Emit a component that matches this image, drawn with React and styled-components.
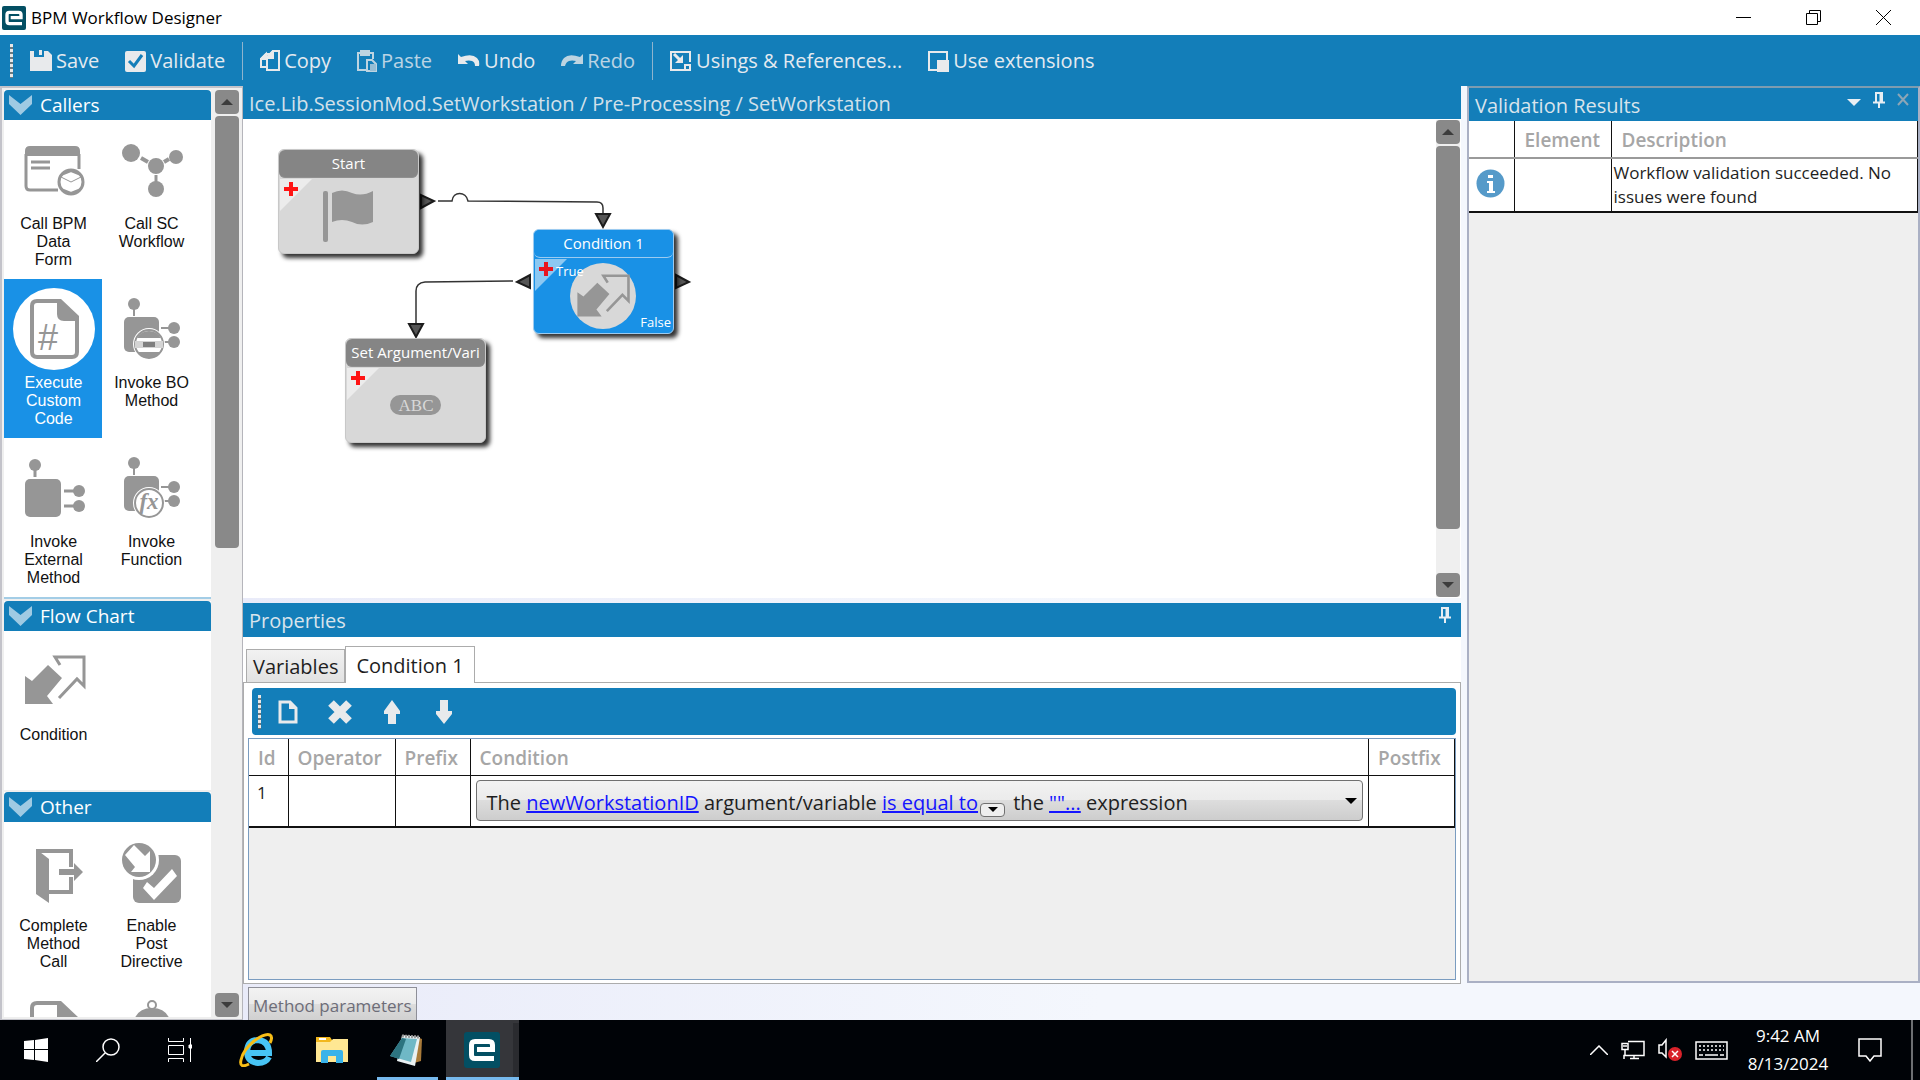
import React, { useState } from 'react'
import styled, { createGlobalStyle } from 'styled-components'

const blue = '#137eb9'
const grey = '#969696'
const ui = "'Open Sans', 'Noto Sans', sans-serif"
const arial = "'Liberation Sans', Arial, sans-serif"

const GlobalStyle = createGlobalStyle`
  * {
    box-sizing: border-box;
  }
  body {
    margin: 0;
    font-family: ${ui};
    font-size: 20px;
    color: #1e1e1e;
  }
  button {
    font: inherit;
    color: inherit;
    background: none;
    border: none;
    padding: 0;
  }
  svg {
    display: block;
    flex: none;
  }
`

const Screen = styled.div`
  display: flex;
  flex-direction: column;
  height: 100vh;
  overflow: hidden;
  background: #fff;
`

// window title bar

const TitleBar = styled.header`
  display: flex;
  align-items: center;
  flex: none;
  height: 35px;
  padding: 0 2px;
  background: #fff;
`

const WindowTitle = styled.h1`
  flex: 1;
  margin: 0 0 0 5px;
  font-size: 17px;
  font-weight: 400;
  line-height: 35px;
  color: #000;
`

const WindowButton = styled.button`
  display: flex;
  align-items: center;
  justify-content: center;
  width: 70px;
  height: 35px;
`

// main toolbar

const Toolbar = styled.nav`
  display: flex;
  align-items: center;
  flex: none;
  height: 51px;
  padding-left: 10px;
  background: ${blue};
  color: #e4eaf0;
`

const Grip = styled.span`
  width: 3px;
  height: 34px;
  background: repeating-linear-gradient(#e8e8e8 0 3px, #6c7a80 3px 5px);
`

const ToolGroup = styled.div`
  display: flex;
  gap: 26px;
  padding: 0 17px;
`

const ToolButton = styled.button`
  display: flex;
  align-items: center;
  gap: 4px;
  line-height: 26px;
  opacity: ${props => (props.disabled ? 0.8 : 1)};
`

const ToolSeparator = styled.span`
  width: 1px;
  height: 38px;
  background: #8fb4cd;
`

const Main = styled.main`
  display: flex;
  flex: 1;
  min-height: 0;
`

// toolbox on the left

const Sidebar = styled.aside`
  display: flex;
  gap: 4px;
  flex: none;
  width: 243px;
  padding: 2px 3px 2px 2px;
  border: 2px solid #c3c3ca;
  border-right: 1px solid #b5b5bb;
  border-bottom-width: 1px;
  background: #efefef;
`

const Groups = styled.div`
  flex: 1;
  overflow: hidden;
`

const Group = styled.section`
  margin-bottom: 2px;
  background: #fff;
  border-bottom: ${props => (props.$ruled ? '2px solid #a3cde6' : 'none')};
`

const GroupHeader = styled.button`
  display: flex;
  align-items: center;
  gap: 8px;
  width: 100%;
  height: 30px;
  padding-left: 5px;
  border-radius: 4px 4px 0 0;
  background: ${blue};
  color: #fff;
  font-size: 19px;
  line-height: 30px;
`

const Tiles = styled.div`
  display: grid;
  grid-template-columns: 98px 98px;
`

const Tile = styled.button`
  display: flex;
  flex-direction: column;
  align-items: center;
  height: 159px;
  padding: 9px 11px 0 12px;
  font-family: ${arial};
  font-size: 16px;
  line-height: 18px;
  gap: 4px;
  color: ${props => (props.$selected ? '#fff' : '#111')};
  background: ${props => (props.$selected ? '#1991e6' : 'transparent')};
`

const IconDisc = styled.span`
  border-radius: 50%;
  background: ${props => (props.$selected ? '#fff' : 'transparent')};
`

// scroll bars

const ScrollTrack = styled.div`
  display: flex;
  flex-direction: column;
  flex: none;
  gap: 2px;
  width: 24px;
  background: #efefef;
`

const ScrollButton = styled.button`
  display: flex;
  align-items: center;
  justify-content: center;
  flex: none;
  width: 24px;
  height: 24px;
  border-radius: 4px;
  background: #898989;
`

const ScrollLane = styled.div`
  flex: 1;
`

const ScrollThumb = styled.div`
  height: ${props => props.$size}%;
  border-radius: 4px;
  background: #898989;
`

// designer column

const Center = styled.div`
  display: flex;
  flex-direction: column;
  flex: 1;
  min-width: 0;
  background: linear-gradient(90deg, #e9ebf9, #f4f7fd 70%);
  padding-right: 6px;
`

const Breadcrumb = styled.div`
  flex: none;
  height: 33px;
  padding-left: 6px;
  background: ${blue};
  color: #d3e1ea;
  line-height: 36px;
  white-space: nowrap;
`

const CanvasRow = styled.div`
  display: flex;
  flex: 1;
  min-height: 0;
  padding: 1px 1px 1px 0;
  background: #fff;
`

const Canvas = styled.div`
  position: relative;
  flex: 1;
  overflow: hidden;
`

const Node = styled.div`
  position: absolute;
  left: ${props => props.$x}px;
  top: ${props => props.$y}px;
  width: 141px;
  height: 105px;
  border: 1px solid ${props => (props.$selected ? '#9ccbf0' : '#c8c8c8')};
  border-radius: 6px;
  background: ${props => (props.$selected ? '#1991e6' : '#d8d8d8')};
  box-shadow: 4px 4px 4px rgba(0, 0, 0, 0.8);
`

const NodeTitle = styled.div`
  height: 28px;
  padding: 0 2px;
  border-radius: 6px;
  border-bottom: 1px solid ${props => (props.$selected ? '#9ccbf0' : '#909090')};
  background: ${props => (props.$selected ? '#1991e6' : '#858585')};
  color: #fff;
  font-size: 15px;
  line-height: 26px;
  text-align: center;
  white-space: nowrap;
`

const NodeBody = styled.svg`
  font-size: 13px;
`

// properties panel

const Properties = styled.section`
  display: flex;
  flex-direction: column;
  flex: none;
  height: 381px;
  margin-top: 5px;
  background: #fff;
`

const PanelHeader = styled.div`
  display: flex;
  align-items: flex-start;
  flex: none;
  height: ${props => props.$height}px;
  padding: 0 ${props => props.$end}px 0 6px;
  background: ${blue};
  color: #d9e4ec;
`

const PanelTitle = styled.h2`
  flex: 1;
  margin: 0;
  font-size: 20px;
  font-weight: 400;
  line-height: 36px;
`

const PanelButton = styled.button`
  padding-top: 4px;
  margin-left: 12px;
`

const Tabs = styled.div`
  display: flex;
  align-items: flex-end;
  flex: none;
  height: 45px;
  padding-left: 3px;
`

const Tab = styled.button`
  height: ${props => (props.$active ? 37 : 33)}px;
  padding: 0 ${props => (props.$active ? 10 : 6)}px;
  margin-bottom: ${props => (props.$active ? -1 : 0)}px;
  border: 1px solid #acacac;
  border-bottom: none;
  background: ${props => (props.$active ? '#fff' : 'linear-gradient(#f2f2f2, #e2e2e2)')};
  z-index: ${props => (props.$active ? 1 : 0)};
`

const TabPanel = styled.div`
  display: flex;
  flex-direction: column;
  flex: 1;
  gap: 3px;
  min-height: 0;
  padding: 5px 4px 3px;
  border: 1px solid #acacac;
`

const GridToolbar = styled.div`
  display: flex;
  align-items: center;
  flex: none;
  gap: 26px;
  height: 47px;
  margin-left: 4px;
  padding-left: 6px;
  border-radius: 4px;
  background: ${blue};

  ${Grip} {
    margin-right: -12px;
  }
`

const GridButton = styled.button`
  display: flex;
  width: 26px;
  justify-content: center;
`

const GridFrame = styled.div`
  flex: 1;
  min-height: 0;
  border: 1px solid #7a9cc0;
  background: #efefef;
`

const Table = styled.table`
  width: 100%;
  border-collapse: collapse;
  table-layout: fixed;
  background: #fff;
`

const Th = styled.th`
  height: 36px;
  padding: 2px 8px 0 9px;
  border-right: 1px solid #111;
  border-bottom: 1px solid #111;
  color: #a6a6a6;
  font-size: 19px;
  font-weight: 600;
  text-align: left;
  white-space: nowrap;
`

const Td = styled.td`
  height: ${props => props.$height}px;
  padding: ${props => props.$pad || '2px'};
  border-right: 1px solid #111;
  border-bottom: 2px solid #111;
  font-size: 17px;
  line-height: 24px;
  vertical-align: ${props => props.$align || 'middle'};
`

const Col = styled.col`
  width: ${props => (props.$width ? `${props.$width}px` : 'auto')};
`

const ConditionBox = styled.div`
  display: flex;
  align-items: center;
  height: 41px;
  padding: 0 5px 0 10px;
  border: 1px solid #707070;
  border-radius: 4px;
  background: linear-gradient(#f2f2f2, #ebebeb 50%, #dddddd 50%, #cdcdcd);
  font-size: 20px;
  white-space: pre;
`

const ConditionText = styled.div`
  flex: 1;
  padding-top: 6px;
`

const ValueLink = styled.a`
  color: #1414ff;
  text-decoration: underline;
`

const SmallDrop = styled.button`
  display: inline-flex;
  align-items: center;
  justify-content: center;
  width: 25px;
  height: 14px;
  margin: 0 3px 0 2px;
  border: 1px solid #707070;
  border-radius: 4px;
  background: #eee;
  vertical-align: -2px;
`

const BottomTabs = styled.div`
  flex: none;
  height: 36px;
  padding: 3px 5px 0;
`

const BottomTab = styled.button`
  height: 33px;
  padding: 2px 4px 0;
  border: 1px solid #8e8f98;
  border-bottom: none;
  background: linear-gradient(#f3f3f3, #ebebeb 50%, #dddddd 50%, #d0d0d0);
  color: #6d6d78;
  font-size: 17px;
`

// validation results

const RightColumn = styled.div`
  display: flex;
  flex: none;
  width: 453px;
  padding-bottom: 37px;
  background: #f4f7fd;
`

const Validation = styled.section`
  display: flex;
  flex-direction: column;
  flex: 1;
  border: 2px solid #aab0c4;
  border-top-color: #7d9cb0;
  background: #efefef;

  ${Th} {
    height: 37px;
    padding: 2px 10px 0;
    border-bottom: 2px solid #9a9a9a;
  }
`

// windows taskbar

const Taskbar = styled.footer`
  display: flex;
  flex: none;
  height: 60px;
  background: #000307;
  color: #fff;
`

const TaskButton = styled.button`
  display: flex;
  align-items: center;
  justify-content: center;
  width: 72px;
  height: 60px;
  border-top: 3px solid transparent;
  border-bottom: 3px solid transparent;
`

const AppButton = styled(TaskButton)`
  width: 76px;
`

const RunningButton = styled(TaskButton)`
  width: 61px;
  margin: 0 8px 0 7px;
  padding-right: 3px;
  border-bottom-color: #76b9ed;
`

const ActiveButton = styled(TaskButton)`
  width: 73px;
  padding-right: 2px;
  border-bottom-color: #76b9ed;
  background: #35363a;
  box-shadow: inset -6px 0 #2a2b2f;
`

const TaskPinned = styled.div`
  display: flex;
  flex: 1;
`

const TaskApps = styled.div`
  display: flex;
  padding-left: 2px;
`

const Tray = styled.div`
  display: flex;
  align-items: center;
  gap: 13px;
  padding-right: 7px;
`

const Clock = styled.time`
  width: 104px;
  padding-right: 10px;
  font-size: 17px;
  line-height: 28px;
  text-align: center;
`

const ShowDesktop = styled.span`
  width: 2px;
  height: 60px;
  margin-left: 16px;
  background: #6d6f72;
`

// icons

const Triangle = ({ up, size = 12, color = '#3c3c3c' }) => (
  <svg width={size} height={size / 2} viewBox='0 0 12 6'>
    <path d={up ? 'M0 6L6 0L12 6Z' : 'M0 0L12 0L6 6Z'} fill={color} />
  </svg>
)

const AppLogo = ({ size }) => (
  <svg width={size} height={size} viewBox='0 0 36 36'>
    <rect width='36' height='36' rx='3' fill='#034f63' />
    <path
      d='M30 26.5H11Q7.5 26.5 7.5 23V13Q7.5 9.5 11 9.5H25Q28.5 9.5 28.5 13V17.5H13'
      fill='none'
      stroke='#fff'
      strokeWidth='5'
    />
  </svg>
)

const Pin = () => (
  <svg width='12' height='16' viewBox='0 0 12 16' fill='none' stroke='#e8eef3' strokeWidth='2'>
    <path d='M3 10V1H9V10M0 10.5H12M6 10V16' />
    <path d='M7.5 1V10' />
  </svg>
)

const Chevron = () => (
  <svg width='23' height='20' viewBox='0 0 23 20'>
    <path d='M0 0L11.5 9L23 0V9L11.5 20L0 9Z' fill='#9fcae3' />
  </svg>
)

const toolIcons = {
  save: (
    <svg width='22' height='22' viewBox='0 0 22 22'>
      <path d='M0 1H4V7H14V1H18L22 5V21H0Z M9 0H12V5H9Z' fill='#e8eaec' />
    </svg>
  ),
  validate: (
    <svg width='21' height='22' viewBox='0 0 21 22'>
      <rect y='1' width='21' height='21' rx='2' fill='#e8eaec' />
      <path d='M4 11L9 16L17 5' fill='none' stroke={blue} strokeWidth='3' />
    </svg>
  ),
  copy: (
    <svg width='20' height='22' viewBox='0 0 20 22' fill={blue} stroke='#e8eaec' strokeWidth='2'>
      <path d='M1 9L6 4H12V17H1Z' />
      <path d='M1 9H6V4Z' fill='#e8eaec' />
      <path d='M7 7L13 1H19V20H7Z' />
      <path d='M7 8H13V1Z' fill='#e8eaec' />
    </svg>
  ),
  paste: (
    <svg width='20' height='22' viewBox='0 0 20 22' fill='none' stroke='#e8eaec' strokeWidth='2'>
      <path d='M9 20H1V3H16V9' />
      <path d='M4 1H12V5H4Z' fill='#e8eaec' />
      <path d='M10 10H15L19 14V21H10Z' />
      <path d='M13 14H19V21H13Z' fill='#b9cfdd' stroke='none' />
    </svg>
  ),
  undo: (
    <svg width='22' height='14' viewBox='0 0 22 14'>
      <path d='M0 0L3 3Q14 -1 19 4Q22 7 21 12L17 12Q17 8 14 7Q11 6 7 7L10 10H0Z' fill='#e8eaec' />
    </svg>
  ),
  redo: (
    <svg width='22' height='14' viewBox='0 0 22 14'>
      <path d='M22 0L19 3Q8 -1 3 4Q0 7 0 12L4 12Q5 8 8 7Q11 6 15 7L12 10H22Z' fill='#e8eaec' />
    </svg>
  ),
  usings: (
    <svg width='22' height='22' viewBox='0 0 22 22' fill='none' stroke='#e8eaec' strokeWidth='2'>
      <path d='M14 20H1V2H20V12' />
      <path d='M4 4L11 11' strokeWidth='3' />
      <path d='M13 5V13H5Z' fill='#e8eaec' stroke='none' />
      <path d='M15 15H20V20H15Z' />
    </svg>
  ),
  extensions: (
    <svg width='21' height='22' viewBox='0 0 21 22' fill='none' stroke='#e8eaec' strokeWidth='2'>
      <path d='M1 2H19V20H1Z' />
      <path d='M9 10H21V22H9Z' fill='#e8eaec' stroke='none' />
    </svg>
  )
}

const ConditionArrows = () => (
  <>
    <path d='M12 36L19 41L35 25L49 38L34 56L40 64H12Z' fill={grey} />
    <path d='M47 25L42 17H71V46L64 39L46 58' fill='none' stroke={grey} strokeWidth='3' />
  </>
)

const Pins = ({ children }) => (
  <>
    <path d='M23 17V28M50 40H63M50 54H63' stroke={grey} strokeWidth='2' />
    <circle cx='23' cy='16' r='6' fill={grey} />
    <circle cx='63' cy='40' r='6' fill={grey} />
    <circle cx='63' cy='54' r='6' fill={grey} />
    <rect x='13' y='29' width='35' height='35' rx='5' fill={grey} />
    <circle cx='38' cy='56' r='16' fill='#fff' />
    <circle cx='38' cy='56' r='14' fill='#fff' stroke={grey} strokeWidth='2' />
    {children}
  </>
)

const DocShape = () => (
  <>
    <path
      d='M45 13H24Q19 13 19 18V64Q19 69 24 69H59Q64 69 64 64V31'
      fill='none'
      stroke={grey}
      strokeWidth='4'
    />
    <path d='M44 11H48L66 28V33H51Q44 33 44 26Z' fill={grey} />
  </>
)

const tileIcons = {
  form: (
    <>
      <path d='M12 22Q12 17 17 17H62Q67 17 67 22V27H12Z' fill={grey} />
      <path d='M13 25V57Q13 61 17 61H45M66 25V40' fill='none' stroke={grey} strokeWidth='3' />
      <path d='M18 33H37M18 39H37' stroke={grey} strokeWidth='3' />
      <circle cx='58' cy='53' r='12' fill='#fff' stroke={grey} strokeWidth='3' />
      <path d='M48 48L58 53L68 48' fill='none' stroke={grey} strokeWidth='1' />
      <path d='M48 46L58 42L68 46M48 60L58 64L68 60' fill='none' stroke={grey} strokeWidth='2' />
    </>
  ),
  workflow: (
    <>
      <path d='M30 29L37 33M53 33L58 30' stroke={grey} strokeWidth='4' />
      <path d='M45 46V53' stroke={grey} strokeWidth='3' />
      <circle cx='20' cy='24' r='9' fill={grey} />
      <circle cx='45' cy='37' r='8' fill={grey} />
      <circle cx='65' cy='28' r='7' fill={grey} />
      <circle cx='45' cy='60' r='8' fill={grey} />
    </>
  ),
  code: (
    <>
      <DocShape />
      <text x='35' y='62' textAnchor='middle' fontFamily={arial} fontSize='36' fill={grey}>#</text>
    </>
  ),
  bo: (
    <Pins>
      <path d='M26 50Q30 43 38 43Q46 43 50 50ZM26 64Q30 70 38 70Q46 70 50 64Z' fill={grey} />
      <path d='M24 53H52V60H24Z' fill='#d4d4d4' />
      <path d='M32 54H44V59H32Z' fill='#7f7f7f' />
    </Pins>
  ),
  external: (
    <>
      <path d='M22 19V30M51 44H66M51 59H66' stroke={grey} strokeWidth='3' />
      <circle cx='22' cy='18' r='6' fill={grey} />
      <circle cx='66' cy='44' r='6' fill={grey} />
      <circle cx='66' cy='59' r='6' fill={grey} />
      <rect x='12' y='32' width='36' height='38' rx='5' fill={grey} />
    </>
  ),
  fx: (
    <Pins>
      <text
        x='38'
        y='62'
        textAnchor='middle'
        fontFamily="'Liberation Serif', serif"
        fontStyle='italic'
        fontWeight='700'
        fontSize='23'
        fill={grey}
      >
        fx
      </text>
    </Pins>
  ),
  condition: <ConditionArrows />,
  complete: (
    <>
      <path d='M23 18L36 28V72L23 63Z' fill={grey} />
      <path d='M23 20H58V36M58 46V61H36' fill='none' stroke={grey} strokeWidth='4' />
      <path d='M46 38H61V32L70 41L61 50V44H46Z' fill={grey} />
    </>
  ),
  enable: (
    <>
      <rect x='22' y='24' width='48' height='48' rx='6' fill={grey} />
      <circle cx='28' cy='29' r='20' fill='#fff' />
      <circle cx='28' cy='29' r='17' fill={grey} />
      <path d='M14 24L23 14L34 25L39 20V41H20L24 36Z' fill='#fff' />
      <path d='M32 57L36 51L43 57L61 38L66 45L43 69Z' fill='#fff' />
    </>
  ),
  doc: <DocShape />,
  bell: (
    <>
      <circle cx='41' cy='15' r='4' fill='none' stroke={grey} strokeWidth='2' />
      <path d='M22 34Q25 18 41 18Q57 18 60 34Z' fill={grey} />
    </>
  )
}

const groups = [
  {
    title: 'Callers',
    ruled: true,
    tiles: [
      { icon: 'form', label: 'Call BPM Data Form' },
      { icon: 'workflow', label: 'Call SC Workflow' },
      { icon: 'code', label: 'Execute Custom Code' },
      { icon: 'bo', label: 'Invoke BO Method' },
      { icon: 'external', label: 'Invoke External Method' },
      { icon: 'fx', label: 'Invoke Function' }
    ]
  },
  { title: 'Flow Chart', tiles: [{ icon: 'condition', label: 'Condition' }] },
  {
    title: 'Other',
    tiles: [
      { icon: 'complete', label: 'Complete Method Call' },
      { icon: 'enable', label: 'Enable Post Directive' },
      { icon: 'doc', label: '' },
      { icon: 'bell', label: '' }
    ]
  }
]

const tools = [
  [
    { icon: 'save', label: 'Save' },
    { icon: 'validate', label: 'Validate' }
  ],
  [
    { icon: 'copy', label: 'Copy' },
    { icon: 'paste', label: 'Paste', disabled: true },
    { icon: 'undo', label: 'Undo' },
    { icon: 'redo', label: 'Redo', disabled: true }
  ],
  [
    { icon: 'usings', label: 'Usings & References...' },
    { icon: 'extensions', label: 'Use extensions' }
  ]
]

const ScrollBar = ({ size }) => (
  <ScrollTrack>
    <ScrollButton aria-label='Scroll up'>
      <Triangle up />
    </ScrollButton>
    <ScrollLane>
      <ScrollThumb $size={size} />
    </ScrollLane>
    <ScrollButton aria-label='Scroll down'>
      <Triangle />
    </ScrollButton>
  </ScrollTrack>
)

const Corner = ({ selected }) => (
  <>
    <path d='M1 1H33L1 33Z' fill={selected ? '#8cc8f2' : '#ececec'} />
    <path d='M10 4H14V9H19V13H14V18H10V13H5V9H10Z' fill={selected ? '#e8141e' : '#ff1414'} />
  </>
)

const FlowNode = ({ x, y, title, selected, children }) => (
  <Node $x={x} $y={y} $selected={selected}>
    <NodeTitle $selected={selected}>{title}</NodeTitle>
    <NodeBody width='139' height='75' viewBox='0 0 139 75'>
      <Corner selected={selected} />
      {children}
    </NodeBody>
  </Node>
)

const Connectors = () => (
  <svg width='600' height='340' viewBox='0 0 600 340' fill='none'>
    <g stroke='#333' strokeWidth='1.5'>
      <path d='M195 81H209C210 71 223 71 225 81L354 82Q360 82 360 88V95' />
      <path d='M270 161L182 162Q173 163 173 171V204' />
    </g>
    <g fill='#555' stroke='#1c1c1c' strokeWidth='2'>
      <path d='M178 75V88L191 81Z' />
      <path d='M353 94H367L360 107Z' />
      <path d='M287 155V168L274 162Z' />
      <path d='M433 155V168L446 162Z' />
      <path d='M166 204H180L173 217Z' />
    </g>
  </svg>
)

const App = () => {
  const [selectedTile, setSelectedTile] = useState('code')
  const [tab, setTab] = useState('Condition 1')

  return (
    <Screen>
      <GlobalStyle />
      <TitleBar>
        <AppLogo size={24} />
        <WindowTitle>BPM Workflow Designer</WindowTitle>
        <WindowButton aria-label='Minimize'>
          <svg width='15' height='15' stroke='#000'>
            <path d='M0 7.5H15' />
          </svg>
        </WindowButton>
        <WindowButton aria-label='Restore'>
          <svg width='15' height='15' fill='none' stroke='#000'>
            <path d='M0.5 3.5H11.5V14.5H0.5ZM3.5 3V0.5H14.5V11.5H12' />
          </svg>
        </WindowButton>
        <WindowButton aria-label='Close'>
          <svg width='15' height='15' stroke='#000'>
            <path d='M0 0L15 15M15 0L0 15' />
          </svg>
        </WindowButton>
      </TitleBar>

      <Toolbar>
        <Grip />
        {tools.map((group, i) => (
          <React.Fragment key={i}>
            {i > 0 && <ToolSeparator />}
            <ToolGroup>
              {group.map(tool => (
                <ToolButton key={tool.label} disabled={tool.disabled}>
                  {toolIcons[tool.icon]}
                  {tool.label}
                </ToolButton>
              ))}
            </ToolGroup>
          </React.Fragment>
        ))}
      </Toolbar>

      <Main>
        <Sidebar>
          <Groups>
            {groups.map(group => (
              <Group key={group.title} $ruled={group.ruled}>
                <GroupHeader>
                  <Chevron />
                  {group.title}
                </GroupHeader>
                <Tiles>
                  {group.tiles.map(tile => (
                    <Tile
                      key={tile.icon}
                      aria-label={tile.label || tile.icon}
                      $selected={tile.icon === selectedTile}
                      onClick={() => setSelectedTile(tile.icon)}
                    >
                      <IconDisc $selected={tile.icon === selectedTile}>
                        <svg width='82' height='82' viewBox='0 0 82 82'>
                          {tileIcons[tile.icon]}
                        </svg>
                      </IconDisc>
                      {tile.label}
                    </Tile>
                  ))}
                </Tiles>
              </Group>
            ))}
          </Groups>
          <ScrollBar size={49.4} />
        </Sidebar>

        <Center>
          <Breadcrumb>Ice.Lib.SessionMod.SetWorkstation / Pre-Processing / SetWorkstation</Breadcrumb>
          <CanvasRow>
            <Canvas>
              <Connectors />
              <FlowNode x={35} y={29} title='Start'>
                <rect x='44' y='13' width='5' height='51' rx='2' fill={grey} />
                <path d='M53 15Q63 10 73 15Q83 19 94 13V44Q83 49 73 44Q63 40 53 44Z' fill={grey} />
              </FlowNode>
              <FlowNode x={290} y={109} title='Condition 1' selected>
                <circle cx='69' cy='38' r='33' fill='#d8d8d8' />
                <svg x='33' y='3' width='71' height='71' viewBox='0 0 82 82'>
                  <ConditionArrows />
                </svg>
                <text x='22' y='18' fill='#fff'>True</text>
                <text x='137' y='69' textAnchor='end' fill='#fff'>False</text>
              </FlowNode>
              <FlowNode x={102} y={218} title='Set Argument/Vari'>
                <rect x='44' y='28' width='51' height='20' rx='10' fill={grey} />
                <text
                  x='70'
                  y='44'
                  textAnchor='middle'
                  fontFamily="'Liberation Serif', serif"
                  fontSize='17'
                  fill='#d8d8d8'
                >
                  ABC
                </text>
              </FlowNode>
            </Canvas>
            <ScrollBar size={90} />
          </CanvasRow>

          <Properties>
            <PanelHeader $height={34} $end={10}>
              <PanelTitle>Properties</PanelTitle>
              <PanelButton aria-label='Pin'>
                <Pin />
              </PanelButton>
            </PanelHeader>
            <Tabs>
              {['Variables', 'Condition 1'].map(name => (
                <Tab key={name} $active={name === tab} onClick={() => setTab(name)}>
                  {name}
                </Tab>
              ))}
            </Tabs>
            <TabPanel>
              <GridToolbar>
                <Grip />
                <GridButton aria-label='New'>
                  <svg width='20' height='24' fill='none' stroke='#e8eaec' strokeWidth='3'>
                    <path d='M2 2H12L18 8V22H2Z' />
                    <path d='M11 1V9H19Z' fill='#e8eaec' stroke='none' />
                  </svg>
                </GridButton>
                <GridButton aria-label='Delete'>
                  <svg width='24' height='24' stroke='#e8eaec' strokeWidth='8'>
                    <path d='M3 3L21 21M21 3L3 21' />
                  </svg>
                </GridButton>
                <GridButton aria-label='Move up'>
                  <svg width='16' height='24' fill='#e8eaec'>
                    <path d='M8 0L16 11V14H12V24H4V14H0V11Z' />
                  </svg>
                </GridButton>
                <GridButton aria-label='Move down'>
                  <svg width='16' height='24' fill='#e8eaec'>
                    <path d='M8 24L16 14V11H12V0H4V11H0V14Z' />
                  </svg>
                </GridButton>
              </GridToolbar>
              <GridFrame>
                <Table>
                  <colgroup>
                    <Col $width={39} />
                    <Col $width={107} />
                    <Col $width={75} />
                    <Col />
                    <Col $width={86} />
                  </colgroup>
                  <thead>
                    <tr>
                      {['Id', 'Operator', 'Prefix', 'Condition', 'Postfix'].map(name => (
                        <Th key={name}>{name}</Th>
                      ))}
                    </tr>
                  </thead>
                  <tbody>
                    <tr>
                      <Td $height={52} $align='top' $pad='5px 8px'>1</Td>
                      <Td />
                      <Td />
                      <Td $pad='2px 5px'>
                        <ConditionBox>
                          <ConditionText>
                            The <ValueLink href='#argument'>newWorkstationID</ValueLink> argument/variable{' '}
                            <ValueLink href='#operator'>is equal to</ValueLink>
                            <SmallDrop aria-label='Choose operator'>
                              <Triangle size={10} color='#000' />
                            </SmallDrop>
                            {' '}the <ValueLink href='#expression'>""...</ValueLink> expression
                          </ConditionText>
                          <button aria-label='Choose condition'>
                            <Triangle size={12} color='#000' />
                          </button>
                        </ConditionBox>
                      </Td>
                      <Td />
                    </tr>
                  </tbody>
                </Table>
              </GridFrame>
            </TabPanel>
          </Properties>
          <BottomTabs>
            <BottomTab>Method parameters</BottomTab>
          </BottomTabs>
        </Center>

        <RightColumn>
          <Validation>
            <PanelHeader $height={33} $end={9}>
              <PanelTitle>Validation Results</PanelTitle>
              <PanelButton aria-label='Menu'>
                <svg width='14' height='16' fill='#e8eef3'>
                  <path d='M0 7H14L7 14Z' />
                </svg>
              </PanelButton>
              <PanelButton aria-label='Pin'>
                <Pin />
              </PanelButton>
              <PanelButton aria-label='Close'>
                <svg width='12' height='16' stroke='#8da6b6' strokeWidth='2'>
                  <path d='M1 2L11 13M11 2L1 13' />
                </svg>
              </PanelButton>
            </PanelHeader>
            <Table>
              <colgroup>
                <Col $width={45} />
                <Col $width={97} />
                <Col />
              </colgroup>
              <thead>
                <tr>
                  <Th aria-label='Status' />
                  <Th>Element</Th>
                  <Th>Description</Th>
                </tr>
              </thead>
              <tbody>
                <tr>
                  <Td $height={52} $pad='0 7px 4px'>
                    <svg width='29' height='29' viewBox='0 0 29 29'>
                      <circle cx='14.5' cy='14.5' r='14' fill='#559ac9' />
                      <path d='M12 6H17V9H12ZM11 12H17V22H19V24H11V22H13V14H11Z' fill='#fff' />
                    </svg>
                  </Td>
                  <Td />
                  <Td>Workflow validation succeeded. No issues were found</Td>
                </tr>
              </tbody>
            </Table>
          </Validation>
        </RightColumn>
      </Main>

      <Taskbar>
        <TaskPinned>
          <TaskButton aria-label='Start'>
            <svg width='24' height='24' fill='#fff'>
              <path d='M0 3L10 2V11H0ZM11 2L24 0V11H11ZM0 12H10V22L0 21ZM11 12H24V24L11 22Z' />
            </svg>
          </TaskButton>
          <TaskButton aria-label='Search'>
            <svg width='24' height='24' fill='none' stroke='#fff' strokeWidth='1.5'>
              <circle cx='15' cy='9' r='8' />
              <path d='M9 15L0 24' />
            </svg>
          </TaskButton>
          <TaskButton aria-label='Task view'>
            <svg width='24' height='24' fill='none' stroke='#fff'>
              <path d='M0.5 0V3.5H15.5V0M0.5 24V20.5H15.5V24M0.5 7.5H15.5V16.5H0.5ZM22.5 0V24' />
              <path d='M21 7H24V10H21Z' fill='#fff' />
            </svg>
          </TaskButton>
          <TaskApps>
            <AppButton aria-label='Internet Explorer'>
              <svg width='34' height='34' viewBox='0 0 34 34' fill='none'>
                <path d='M30 24Q27 30 19 30Q8 29 8 18Q9 7 19 7Q30 8 30 20H11' stroke='#47c4f5' strokeWidth='6' />
                <path d='M10 31Q0 36 2 27Q4 17 15 8Q26 0 31 2Q34 4 31 10' stroke='#f6bd17' strokeWidth='3' />
              </svg>
            </AppButton>
            <AppButton aria-label='File Explorer'>
              <svg width='32' height='28' viewBox='0 0 32 28'>
                <path d='M0 1H14L16 4V8H0Z' fill='#f2b81d' />
                <path d='M3 2H10V4H3Z' fill='#fff' />
                <path d='M0 6H14L17 3H32V26H0Z' fill='#ffe793' />
                <path d='M5 27V16Q5 14 7 14H25Q27 14 27 16V27H20V20H12V27Z' fill='#39b3ea' />
              </svg>
            </AppButton>
            <RunningButton aria-label='Notepad'>
              <svg width='34' height='34' viewBox='0 0 34 34'>
                <path d='M28 4L33 6L32 28L25 30Z' fill='#a97b3a' />
                <path d='M13 2L31 4L26 33L8 28Z' fill='#e9f1f3' />
                <path d='M13 5L28 6L22 29L1 23Z' fill='#6fb8c6' />
                <path d='M13 5L17 6L10 26L1 23Z' fill='#2d7480' />
                <path d='M13 3L30 4' stroke='#9a9a9a' strokeWidth='3' strokeDasharray='2 1' />
              </svg>
            </RunningButton>
            <ActiveButton aria-label='BPM Workflow Designer'>
              <AppLogo size={36} />
            </ActiveButton>
          </TaskApps>
        </TaskPinned>
        <Tray>
          <svg width='18' height='10' fill='none' stroke='#fff' strokeWidth='1.5'>
            <path d='M0 10L9 1L18 10' />
          </svg>
          <svg width='24' height='20' fill='none' stroke='#fff' strokeWidth='1.5'>
            <path d='M7 1.5H23V15.5H3V19M9 18.5H18M13 16V18M1 3.5H7V9.5H1ZM4 9V15M2 6H6' />
          </svg>
          <svg width='24' height='24' fill='none' stroke='#fff' strokeWidth='1.5'>
            <path d='M8 2V19L4 15H1V7H4Z' />
            <circle cx='17' cy='16' r='7' fill='#d9222a' stroke='none' />
            <path d='M14 13L20 19M20 13L14 19' />
          </svg>
          <svg width='33' height='19' fill='none' stroke='#fff' strokeWidth='1.5'>
            <path d='M1 1H32V18H1Z' />
            <path d='M4 5H29M4 9H29' strokeDasharray='2 2' />
            <path d='M4 14H8M10 14H23M25 14H29' />
          </svg>
          <Clock>
            9:42 AM
            <br />
            8/13/2024
          </Clock>
          <svg width='24' height='24' fill='none' stroke='#fff' strokeWidth='1.5'>
            <path d='M1 1H23V18H16L12 23L8 18H1Z' />
          </svg>
          <ShowDesktop />
        </Tray>
      </Taskbar>
    </Screen>
  )
}

export default App
